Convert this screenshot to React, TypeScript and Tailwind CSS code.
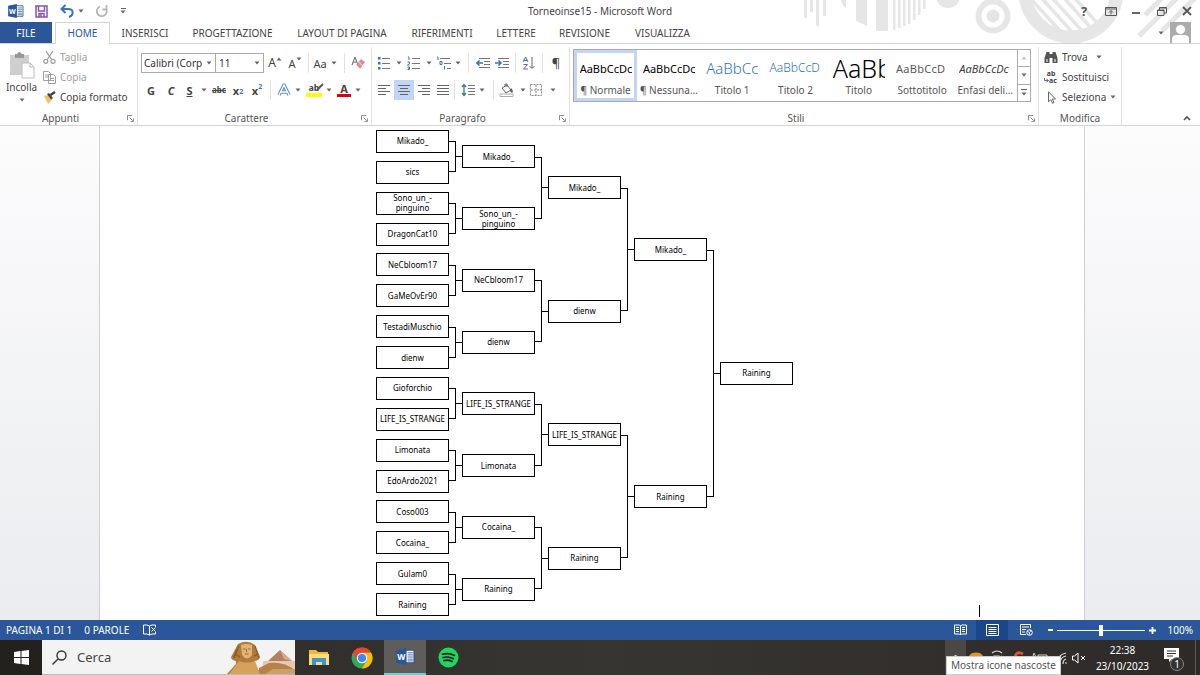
import type { ReactNode } from 'react'

interface BracketNode {
  name: string
  feeders?: [BracketNode, BracketNode]
}

const leaf = (name: string): BracketNode => ({ name })
const match = (name: string, a: BracketNode, b: BracketNode): BracketNode => ({
  name,
  feeders: [a, b],
})

const PINGUINO = 'Sono_un_-\npinguino'

const bracket = match(
  'Raining',
  match(
    'Mikado_',
    match(
      'Mikado_',
      match('Mikado_', leaf('Mikado_'), leaf('sics')),
      match(PINGUINO, leaf(PINGUINO), leaf('DragonCat10')),
    ),
    match(
      'dienw',
      match('NeCbloom17', leaf('NeCbloom17'), leaf('GaMeOvEr90')),
      match('dienw', leaf('TestadiMuschio'), leaf('dienw')),
    ),
  ),
  match(
    'Raining',
    match(
      'LIFE_IS_STRANGE',
      match('LIFE_IS_STRANGE', leaf('Gioforchio'), leaf('LIFE_IS_STRANGE')),
      match('Limonata', leaf('Limonata'), leaf('EdoArdo2021')),
    ),
    match(
      'Raining',
      match('Cocaina_', leaf('Coso003'), leaf('Cocaina_')),
      match('Raining', leaf('Gulam0'), leaf('Raining')),
    ),
  ),
)

const tabs = [
  { label: 'INSERISCI', width: 'w-[70px]' },
  { label: 'PROGETTAZIONE', width: 'w-[105px]' },
  { label: 'LAYOUT DI PAGINA', width: 'w-[114px]' },
  { label: 'RIFERIMENTI', width: 'w-[86px]' },
  { label: 'LETTERE', width: 'w-[62px]' },
  { label: 'REVISIONE', width: 'w-[75px]' },
  { label: 'VISUALIZZA', width: 'w-[81px]' },
]

const styles = [
  { name: '¶ Normale', sample: 'AaBbCcDc', look: 'text-[11px] text-black' },
  { name: '¶ Nessuna...', sample: 'AaBbCcDc', look: 'text-[11px] text-black' },
  { name: 'Titolo 1', sample: 'AaBbCc', look: 'text-[15px] font-light text-[#2e74b5]' },
  { name: 'Titolo 2', sample: 'AaBbCcD', look: 'text-[12px] font-light text-[#2e74b5]' },
  { name: 'Titolo', sample: 'AaBb', look: 'text-[25px] font-light text-black' },
  { name: 'Sottotitolo', sample: 'AaBbCcD', look: 'text-[11px] tracking-wide text-[#5a5a5a]' },
  { name: 'Enfasi deli...', sample: 'AaBbCcDc', look: 'text-[11px] italic text-[#404040]' },
]

function Caret({ className = '' }: { className?: string }) {
  return (
    <svg viewBox="0 0 6 4" className={`h-1 w-1.5 shrink-0 ${className}`}>
      <path d="M0.5 0.5h5L3 3.5z" fill="#666" />
    </svg>
  )
}

function Tool({ label, className, children }: { label: string; className: string; children: ReactNode }) {
  return (
    <button
      aria-label={label}
      className={`flex h-5 shrink-0 items-center justify-center leading-none text-[#444] ${className}`}
    >
      {children}
    </button>
  )
}

function Separator({ className = 'w-3' }: { className?: string }) {
  return (
    <span className={`flex shrink-0 justify-center ${className}`}>
      <span className="h-5 w-px bg-[#e1e1e1]" />
    </span>
  )
}

function Group({ title, launcher, className, children }: {
  title: string
  launcher?: boolean
  className: string
  children: ReactNode
}) {
  return (
    <section className={`flex flex-col border-r border-[#e1e1e1] ${className}`}>
      <div className="h-16">{children}</div>
      <div className={`relative h-3.5 text-center text-[10px] leading-[14px] text-[#555] ${launcher ? 'pr-4' : ''}`}>
        {title}
        {launcher && (
          <button aria-label={`Opzioni ${title}`} className="absolute right-[3px] top-1">
            <svg viewBox="0 0 8 8" className="size-[7px]" fill="none" stroke="#777">
              <path d="M0.5 6V0.5H6M3 3l3.5 3.5M7.5 4v3.5H4" />
            </svg>
          </button>
        )}
      </div>
    </section>
  )
}

// Four text lines whose ends depend on the paragraph alignment
function Lines({ d }: { d: string }) {
  return (
    <svg viewBox="0 0 14 12" className="h-3 w-3.5" stroke="#666" fill="none">
      <path d={d} />
    </svg>
  )
}

function WordLogo({ className }: { className: string }) {
  return (
    <svg viewBox="0 0 18 16" className={className}>
      <path d="M9 2h8v12H9z" fill="#fff" stroke="#2b579a" />
      <path d="M11 4.5h5M11 6.5h5M11 8.5h5M11 10.5h5M11 12.2h5" stroke="#2b579a" strokeWidth="0.8" />
      <path d="M0 2l10-2v16L0 14z" fill="#2b579a" />
      <text x="5" y="11" textAnchor="middle" fontSize="8" fontWeight="700" fill="#fff">W</text>
    </svg>
  )
}

function Decoration() {
  return (
    <svg viewBox="0 0 400 43" className="pointer-events-none absolute right-0 top-0 h-[43px] w-[400px]" fill="none">
      <g fill="#e6e6e6">
        <path d="M-3 0h3v12h-3zM4 0h3v18H4zM10 0h3v12h-3zM16 0h3v26h-3zM23 0h3v16h-3zM41 0h5v8q-4-3-5-8zM56 0h11v26l-11-5zM76 0h12v31H76z" />
        <path d="M93 0h2.5v30H93zM98 0h2.5v28H98zM103 0h2.5v26h-2.5zM108 0h2.5v24h-2.5zM113 0h2.5v20h-2.5zM118 0h2.5v15h-2.5zM123 0h2.5v9H123z" />
        <circle cx="148" cy="-4" r="12" />
        <circle cx="193" cy="16" r="6.5" />
      </g>
      <g stroke="#e6e6e6">
        <circle cx="193" cy="16" r="14.5" strokeWidth="6" />
        <circle cx="271" cy="-9" r="46" strokeWidth="13" />
        <path d="M228-4l36 39M237-7l36 40M246-9l37 41M255-12l37 41M264-14l34 38" strokeWidth="3.5" />
        <path d="M339 36l40-40M345 15l20-20M362 31l34-34" strokeWidth="5" />
      </g>
    </svg>
  )
}

function TitleBar() {
  return (
    <div className="relative flex h-[22px] items-center">
      <div className="flex items-center pl-2">
        <WordLogo className="h-3.5 w-4" />
        <button aria-label="Salva" className="ml-[11px]">
          <svg viewBox="0 0 13 13" className="size-[13px]" fill="none" stroke="#8856a7" strokeWidth="1.5">
            <path d="M1 1h11v11H1zM3.5 1v5h6V1M4 12V8.5h5V12M6 9v3" />
          </svg>
        </button>
        <button aria-label="Annulla" className="ml-3 flex items-center gap-1">
          <svg viewBox="0 0 14 14" className="size-3.5" fill="none" stroke="#3b73b9" strokeWidth="2">
            <path d="M5.5 1L1.5 5l4 4M2 5h6c6 0 6 6 1 8" />
          </svg>
          <Caret />
        </button>
        <button aria-label="Ripeti" className="ml-[11px]">
          <svg viewBox="0 0 14 14" className="size-3.5" fill="none" stroke="#b5b5b5" strokeWidth="1.8">
            <path d="M5 2.5a5 5 0 1 0 6 2M7.5 5.5h4v-4.5" />
          </svg>
        </button>
        <button aria-label="Personalizza" className="ml-[11px] flex flex-col items-center gap-px">
          <span className="h-px w-[5px] bg-[#666]" />
          <Caret />
        </button>
      </div>
      <h1 className="flex-1 pl-1 pr-2 text-center text-[10px] text-[#444]">Torneoinse15 - Microsoft Word</h1>
      <div className="flex items-center gap-[15px] pr-2 text-[#555]">
        <button aria-label="Guida" className="w-3 text-[13px] font-bold leading-none">?</button>
        <button aria-label="Opzioni barra multifunzione">
          <svg viewBox="0 0 12 9" className="h-[9px] w-3" fill="none" stroke="currentColor">
            <path d="M0.5 0.5h11v8H0.5zM0.5 2h11M6 7.5V4M4 5.5L6 3.5l2 2" />
          </svg>
        </button>
        <button aria-label="Riduci a icona" className="w-2.5">
          <span className="mt-1 block h-0.5 w-2 bg-[#666]" />
        </button>
        <button aria-label="Ripristina">
          <svg viewBox="0 0 10 9" className="h-[9px] w-2.5" fill="none" stroke="currentColor">
            <path d="M0.5 3h6.5v5.5H0.5zM0.5 3.5h6.5M2.5 3V0.5h7v5.5H7M2.5 1h7" />
          </svg>
        </button>
        <button aria-label="Chiudi">
          <svg viewBox="0 0 10 10" className="size-2.5" stroke="currentColor" strokeWidth="1.8">
            <path d="M1 1l8 8M9 1L1 9" />
          </svg>
        </button>
      </div>
    </div>
  )
}

function TabBar() {
  return (
    <nav className="relative flex h-[22px] border-b border-[#d4d4d4] text-[10px] text-[#444]">
      <button className="w-[52px] bg-[#2b579a] pt-px text-white">FILE</button>
      <button className="-mb-px ml-[3px] w-[55px] border border-b-0 border-[#d4d4d4] bg-white text-[#2b579a]">
        HOME
      </button>
      {tabs.map((tab) => (
        <button key={tab.label} className={`shrink-0 whitespace-nowrap pt-px text-center ${tab.width}`}>
          {tab.label}
        </button>
      ))}
      <div className="flex flex-1 items-center justify-end gap-1.5 pr-[9px]">
        <Caret />
        <svg viewBox="0 0 21 21" className="size-[21px]">
          <path d="M0 0h21v21H0z" fill="#ababab" />
          <path d="M2 21v-4q0-4 5-4h7q5 0 5 4v4z" fill="#fff" />
          <circle cx="10.5" cy="7.5" r="5" fill="#fff" stroke="#ababab" />
        </svg>
      </div>
    </nav>
  )
}

function Clipboard() {
  return (
    <Group title="Appunti" launcher className="w-[138px]">
      <div className="flex text-[10px] text-[#444]">
        <button className="flex w-[43px] flex-col items-center pt-1">
          <svg viewBox="0 0 26 28" className="h-7 w-[26px]">
            <path d="M1 4h19v20H1z" fill="#cfcfcf" />
            <path d="M6 3h2q2-4 5 0h2v4H6z" fill="#999" />
            <path d="M13 12h8l4 4v11H13z" fill="#fff" stroke="#bbb" />
            <path d="M21 12v4h4" fill="none" stroke="#bbb" />
          </svg>
          <span className="pt-px leading-[14px]">Incolla</span>
          <Caret className="mt-1" />
        </button>
        <div className="flex flex-col">
          <button className="flex h-5 items-center gap-1 text-[#a0a0a0]">
            <svg viewBox="0 0 13 13" className="size-[13px]" fill="none" stroke="#a0a0a0" strokeWidth="1.3">
              <path d="M3 0l6 9M10 0L4 9" />
              <circle cx="2.8" cy="10.3" r="2" />
              <circle cx="10" cy="10.3" r="2" />
            </svg>
            Taglia
          </button>
          <button className="flex h-5 items-center gap-1 text-[#a0a0a0]">
            <svg viewBox="0 0 13 13" className="size-[13px]" fill="#fff" stroke="#a0a0a0">
              <path d="M0.5 0.5h5l2 2v7h-7zM5.5 3.5h5l2 2v7h-7z" />
              <path d="M2 4h3M2 6h3M7 7.5h4M7 9.5h4" />
            </svg>
            Copia
          </button>
          <button className="flex h-5 items-center gap-1 whitespace-nowrap">
            <svg viewBox="0 0 13 13" className="size-[13px]">
              <path d="M1 5l4-1 4 5-4 4z" fill="#efc06e" />
              <path d="M4 3l2-1 4 5-2 1.5z" fill="#444" />
              <path d="M7.5 4L12 1" stroke="#444" strokeWidth="2.5" />
            </svg>
            Copia formato
          </button>
        </div>
      </div>
    </Group>
  )
}

function FontGroup() {
  return (
    <Group title="Carattere" launcher className="w-[234px]">
      <div className="flex flex-col gap-[7px] pl-[3px] pt-1.5">
        <div className="flex h-5 items-center">
          <label className="relative flex h-5 w-[75px] items-center border border-[#ababab]">
            <select aria-label="Tipo di carattere" className="w-full appearance-none bg-transparent pl-0.5 text-[10px] text-[#333]">
              <option>Calibri (Corp</option>
            </select>
            <Caret className="absolute right-[3px]" />
          </label>
          <label className="relative flex h-5 w-12 items-center border border-l-0 border-[#ababab]">
            <select aria-label="Dimensione carattere" className="w-full appearance-none bg-transparent pl-[3px] text-[10px] text-[#333]">
              <option>11</option>
            </select>
            <Caret className="absolute right-[3px]" />
          </label>
          <Tool label="Aumenta" className="w-[22px] text-[12px]">A<Caret className="mb-2 rotate-180" /></Tool>
          <Tool label="Riduci" className="w-[18px] text-[11px]">A<Caret className="mb-2" /></Tool>
          <Separator className="w-2" />
          <Tool label="Maiuscole/minuscole" className="w-[26px] gap-1 text-[11px]">Aa<Caret /></Tool>
          <Separator />
          <Tool label="Cancella formattazione" className="w-4">
            <svg viewBox="0 0 14 14" className="size-3.5 shrink-0">
              <path d="M1 9L4 1l3 8M2 6h4" fill="none" stroke="#666" />
              <path d="M5 9l5-6 4 3-5 7z" fill="#e58a9b" />
              <path d="M5 9l4 4M7.5 6l4 3.5" stroke="#fff" strokeWidth="0.7" />
            </svg>
          </Tool>
        </div>
        <div className="flex h-5 items-center text-[11px]">
          <Tool label="Grassetto" className="w-5 font-bold">G</Tool>
          <Tool label="Corsivo" className="w-5 font-bold italic">C</Tool>
          <Tool label="Sottolineato" className="w-[17px] font-bold underline">S</Tool>
          <Tool label="Stile sottolineatura" className="w-3"><Caret /></Tool>
          <Tool label="Barrato" className="w-[18px] text-[8px] font-bold line-through">abc</Tool>
          <Tool label="Pedice" className="w-5 font-bold">x<sub className="text-[7px] text-[#3b73b9]">2</sub></Tool>
          <Tool label="Apice" className="w-[18px] font-bold">x<sup className="text-[7px] text-[#3b73b9]">2</sup></Tool>
          <Separator className="w-2" />
          <Tool label="Effetti testo" className="w-5">
            <svg viewBox="0 0 14 14" className="size-3.5" fill="none">
              <path d="M2 12L7 2l5 10M4 9h6" stroke="#5b92d0" strokeWidth="3.5" strokeLinejoin="round" />
              <path d="M2 12L7 2l5 10M4 9h6" stroke="#fff" strokeWidth="1.3" />
            </svg>
          </Tool>
          <Tool label="Scelta effetto" className="w-[7px]"><Caret /></Tool>
          <Tool label="Evidenziatore" className="ml-1 w-[18px] flex-col">
            <span className="relative text-[9px] font-bold leading-[10px]">
              ab
              <svg viewBox="0 0 8 8" className="absolute -right-1 top-0 size-2"><path d="M1 7L7 1" stroke="#555" strokeWidth="2" /></svg>
            </span>
            <span className="h-1 w-4 bg-[#ffff00]" />
          </Tool>
          <Tool label="Colore evidenziatore" className="w-[11px]"><Caret /></Tool>
          <Tool label="Colore carattere" className="w-5 flex-col">
            <span className="text-[11px] font-bold leading-[11px]">A</span>
            <span className="h-[3px] w-3.5 bg-[#e00000]" />
          </Tool>
          <Tool label="Scelta colore" className="w-2"><Caret /></Tool>
        </div>
      </div>
    </Group>
  )
}

function ParagraphGroup() {
  return (
    <Group title="Paragrafo" launcher className="w-[198px]">
      <div className="flex flex-col gap-[7px] pl-0.5 pt-1.5">
        <div className="flex h-5 items-center">
          <Tool label="Elenchi puntati" className="w-5">
            <svg viewBox="0 0 14 14" className="size-3.5">
              <path d="M1 1h2.5v2.5H1zM1 6h2.5v2.5H1zM1 11h2.5v2.5H1z" fill="#3b73b9" />
              <path d="M5 2.5h8M5 7.5h8M5 12.5h8" stroke="#777" />
            </svg>
          </Tool>
          <Tool label="Punto elenco" className="w-2.5"><Caret /></Tool>
          <Tool label="Elenchi numerati" className="w-5">
            <svg viewBox="0 0 14 14" className="size-3.5" fill="none">
              <path d="M1 1h1v3M0.5 6h2v1.5l-2 1.5h2M0.5 11h2v2.5h-2M1 12.2h1.5" stroke="#3b73b9" />
              <path d="M5 2.5h8M5 7.5h8M5 12.5h8" stroke="#777" />
            </svg>
          </Tool>
          <Tool label="Formato numero" className="w-2.5"><Caret /></Tool>
          <Tool label="Elenco a più livelli" className="w-5">
            <svg viewBox="0 0 16 14" className="h-3.5 w-4" fill="none">
              <path d="M1 1h1v3M4 5.5h2v3H4zM8.5 10v3.5" stroke="#3b73b9" />
              <path d="M4 2.5h10M8 7.5h7M11 12.5h4" stroke="#777" />
            </svg>
          </Tool>
          <Tool label="Livelli" className="w-2"><Caret /></Tool>
          <Separator />
          <Tool label="Riduci rientro" className="w-[18px]">
            <svg viewBox="0 0 14 12" className="h-3 w-3.5" fill="none">
              <path d="M3 1.5h11M8 4.5h6M8 7.5h6M3 10.5h11" stroke="#777" />
              <path d="M7 6H1M3.5 3.5L1 6l2.5 2.5" stroke="#3b73b9" strokeWidth="1.6" />
            </svg>
          </Tool>
          <Tool label="Aumenta rientro" className="w-5">
            <svg viewBox="0 0 14 12" className="h-3 w-3.5" fill="none">
              <path d="M3 1.5h11M8 4.5h6M8 7.5h6M3 10.5h11" stroke="#777" />
              <path d="M0 6h6M3.5 3.5L6 6 3.5 8.5" stroke="#3b73b9" strokeWidth="1.6" />
            </svg>
          </Tool>
          <Separator className="w-1.5" />
          <Tool label="Ordina" className="w-[22px]">
            <svg viewBox="0 0 14 14" className="size-3.5" fill="none">
              <path d="M1 6l2.5-5L6 6M2 4.5h3" stroke="#3b73b9" />
              <path d="M1.5 8.5h4l-4 4.5h4.5" stroke="#8856a7" />
              <path d="M10 1v11M7.5 10L10 12.5 12.5 10" stroke="#666" />
            </svg>
          </Tool>
          <Separator className="w-1" />
          <Tool label="Mostra tutto" className="w-6 text-[13px]">¶</Tool>
        </div>
        <div className="flex h-5 items-center">
          <Tool label="Allinea a sinistra" className="w-5"><Lines d="M1 1.5h12M1 4.5h8M1 7.5h12M1 10.5h8" /></Tool>
          <Tool label="Centra" className="w-5 bg-[#c2d5f2]"><Lines d="M1 1.5h12M3 4.5h8M1 7.5h12M3 10.5h8" /></Tool>
          <Tool label="Allinea a destra" className="w-5"><Lines d="M1 1.5h12M5 4.5h8M1 7.5h12M5 10.5h8" /></Tool>
          <Tool label="Giustifica" className="w-[18px]"><Lines d="M1 1.5h12M1 4.5h12M1 7.5h12M1 10.5h12" /></Tool>
          <Separator className="w-1" />
          <Tool label="Interlinea" className="w-[34px] gap-1">
            <svg viewBox="0 0 14 14" className="size-3.5" fill="none">
              <path d="M3 1.5v11M1 4l2-2.5L5 4M1 10l2 2.5L5 10" stroke="#3b73b9" strokeWidth="1.3" />
              <path d="M7 2.5h7M7 5.5h7M7 8.5h7M7 11.5h7" stroke="#777" />
            </svg>
            <Caret />
          </Tool>
          <Separator className="w-1.5" />
          <Tool label="Sfondo" className="w-8 gap-1.5">
            <svg viewBox="0 0 15 14" className="h-3.5 w-[15px]" fill="none">
              <path d="M3 5l5-3 4 5-5 3zM6 4V1h2v3" stroke="#666" />
              <path d="M12 5q3 3 1 5l-2-2z" fill="#3b5f8a" />
              <path d="M1 11h13v2.5H1z" stroke="#aaa" fill="#fff" />
            </svg>
            <Caret />
          </Tool>
          <Tool label="Bordi" className="w-[30px] gap-2">
            <svg viewBox="0 0 12 12" className="size-3" fill="none" stroke="#888">
              <path d="M0.5 0.5h11v11H0.5zM6 1v10M1 6h10" strokeDasharray="2 1" />
            </svg>
            <Caret />
          </Tool>
        </div>
      </div>
    </Group>
  )
}

function StylesGroup() {
  return (
    <Group title="Stili" launcher className="w-[469px]">
      <div className="pl-[3px] pr-[7px] pt-0.5">
        <div className="flex h-[53px] border border-[#ababab]">
          {styles.map((style, index) => (
            <button
              key={style.name}
              className={`flex min-w-0 flex-1 flex-col items-center justify-end overflow-hidden border-[3px] ${
                index === 0 ? 'border-[#c2d5f2]' : 'border-transparent'
              }`}
            >
              <span className={`flex h-[30px] w-[52px] items-center overflow-hidden whitespace-nowrap leading-none ${style.look}`}>
                {style.sample}
              </span>
              <span className="whitespace-nowrap text-[10px] leading-[15px] text-[#555]">{style.name}</span>
            </button>
          ))}
          <div className="flex w-[13px] flex-col divide-y divide-[#ababab] border-l border-[#ababab]">
            <button aria-label="Su" className="flex flex-1 items-center justify-center"><Caret className="rotate-180 opacity-40" /></button>
            <button aria-label="Giù" className="flex flex-1 items-center justify-center"><Caret /></button>
            <button aria-label="Altro" className="flex flex-1 flex-col items-center justify-center gap-0.5">
              <span className="h-px w-1.5 bg-[#666]" />
              <Caret />
            </button>
          </div>
        </div>
      </div>
    </Group>
  )
}

function EditGroup() {
  return (
    <Group title="Modifica" className="w-[83px]">
      <div className="flex flex-col items-start pl-[5px] text-[10px] text-[#444]">
        <button className="flex h-5 items-center gap-1">
          <svg viewBox="0 0 13 12" className="h-3 w-3.5" fill="#555">
            <path d="M2 1h3v2h3V1h3l2 6v5H8V7H5v5H0V7z" />
            <path d="M1.5 8h2v3h-2zM9.5 8h2v3h-2z" fill="#aaa" />
          </svg>
          Trova
          <Caret className="ml-1" />
        </button>
        <button className="flex h-5 items-center gap-1">
          <span className="flex w-3.5 flex-col text-[7px] font-bold leading-[7px]">
            <span>ab</span>
            <span className="flex items-center">
              <svg viewBox="0 0 5 5" className="size-[5px]" fill="none" stroke="#3b73b9">
                <path d="M0.5 0v2.5h4M2.5 1l2 1.5-2 1.5" />
              </svg>
              ac
            </span>
          </span>
          Sostituisci
        </button>
        <button className="flex h-5 items-center gap-1 whitespace-nowrap">
          <svg viewBox="0 0 13 13" className="h-[13px] w-3.5" fill="#fff" stroke="#666">
            <path d="M4 0.8v10l2.3-2.2 1.7 3.7 1.5-0.7L7.8 8H11z" />
          </svg>
          Seleziona
          <Caret />
        </button>
      </div>
    </Group>
  )
}

function Ribbon() {
  return (
    <div className="flex h-[82px] border-b border-[#d4d4d4] bg-white">
      <div className="flex flex-1 pt-[3px]">
        <Clipboard />
        <FontGroup />
        <ParagraphGroup />
        <StylesGroup />
        <EditGroup />
      </div>
      <button aria-label="Comprimi barra multifunzione" className="self-end pb-1 pr-[9px]">
        <svg viewBox="0 0 8 6" className="h-1.5 w-2" fill="none" stroke="#555" strokeWidth="1.6">
          <path d="M1 5l3-3 3 3" />
        </svg>
      </button>
    </div>
  )
}

function Match({ node }: { node: BracketNode }) {
  return (
    <div className="flex min-h-0 flex-1 items-center">
      {node.feeders && (
        <>
          <div className="flex flex-col self-stretch">
            {node.feeders.map((feeder, index) => (
              <Match key={index} node={feeder} />
            ))}
          </div>
          <div className="h-1/2 w-[7px] border-y border-r border-black" />
          <div className="h-px w-1.5 bg-black" />
        </>
      )}
      <div className="flex h-[23px] w-[73px] shrink-0 items-center justify-center whitespace-pre border border-black bg-white text-center text-[8px] leading-[10px] text-black">
        {node.name}
      </div>
    </div>
  )
}

function Document() {
  return (
    <main className="flex min-h-0 flex-1 bg-linear-to-b from-[#fcfcfd] to-[#ebecef] pl-[99px] pr-[115px]">
      <div className="relative flex flex-1 border-x border-[#d0d0d0] bg-white pl-[276px]">
        <div className="flex">
          <Match node={bracket} />
        </div>
        <span className="absolute bottom-[3px] right-[104px] h-3 w-px bg-black" />
      </div>
    </main>
  )
}

function StatusBar() {
  return (
    <footer className="flex h-5 items-center bg-[#2b579a] text-[10px] text-white">
      <span className="pl-1.5">PAGINA 1 DI 1</span>
      <span className="ml-3">0 PAROLE</span>
      <button aria-label="Controllo ortografia" className="ml-3.5">
        <svg viewBox="0 0 14 12" className="h-3 w-3.5" fill="none" stroke="#fff">
          <path d="M6.5 2Q4 0.5 0.5 1v9q3.5-0.5 6 1V2q2-1.5 6-1v2M6.5 11q2-1.5 6-1V8M8.5 3.5l4 4M12.5 3.5l-4 4" />
        </svg>
      </button>
      <div className="ml-auto flex h-full items-center">
        <button aria-label="Modalità lettura" className="flex h-full w-8 items-center justify-center">
          <svg viewBox="0 0 13 12" className="h-3 w-[13px]" fill="none" stroke="#fff">
            <path d="M0.5 1h5l1 1 1-1h5v9h-5l-1 1-1-1h-5zM6.5 2v9M2 3.5h3M2 5.5h3M2 7.5h3M8 3.5h3M8 5.5h3M8 7.5h3" />
          </svg>
        </button>
        <button aria-label="Layout di stampa" className="flex h-full w-8 items-center justify-center bg-[#19478a]">
          <svg viewBox="0 0 13 12" className="h-3 w-[13px]" fill="none" stroke="#fff">
            <path d="M0.5 0.5h12v11H0.5zM2.5 3.5h8M2.5 5.5h8M2.5 7.5h8M2.5 9.5h8" />
          </svg>
        </button>
        <button aria-label="Layout Web" className="flex h-full w-9 items-center justify-center">
          <svg viewBox="0 0 13 12" className="h-3 w-[13px]" fill="none" stroke="#fff">
            <path d="M6 10.5H0.5V0.5h10V4M2 3h7M2 5.5h4M2 8h3" />
            <circle cx="9.5" cy="8.5" r="2.8" />
            <path d="M7.5 7.5l2 1v2M10 6l1 2" />
          </svg>
        </button>
        <button aria-label="Zoom indietro" className="flex w-3 justify-center"><span className="h-0.5 w-[5px] bg-white" /></button>
        <input
          type="range"
          aria-label="Zoom"
          defaultValue={50}
          className="mx-px h-[11px] w-[88px] appearance-none bg-linear-to-b from-transparent from-45% via-white via-50% to-transparent to-55% [&::-webkit-slider-thumb]:h-[11px] [&::-webkit-slider-thumb]:w-1 [&::-webkit-slider-thumb]:appearance-none [&::-webkit-slider-thumb]:bg-white"
        />
        <button aria-label="Zoom avanti" className="flex w-3 justify-center">
          <svg viewBox="0 0 7 7" className="size-[7px]" stroke="#fff" strokeWidth="1.8"><path d="M0 3.5h7M3.5 0v7" /></svg>
        </button>
        <span className="w-[42px] pr-[7px] text-right">100%</span>
      </div>
    </footer>
  )
}

function Sphinx() {
  return (
    <svg viewBox="0 0 68 33" className="h-[33px] w-[68px] shrink-0">
      <path d="M36 20h32v13H36z" fill="#e6c7b1" />
      <path d="M53 9l12 11H41z" fill="#b47f62" />
      <path d="M53 9l12 11-8-2z" fill="#d9a98a" />
      <path d="M42 22l-10 5v6h36v-4q-12-9-26-7z" fill="#b88148" />
      <path d="M46 28h22v5H38z" fill="#caa06b" />
      <path d="M11 3q9-5 17 1l5 12q-1 4-6 4v4l8 9H0l9-10v-3q-5-1-5-4z" fill="#b07a3c" />
      <path d="M12 5L7 17M10 8l-3 8M28 5l4 12M8 13l5 3M27 15l4-2" stroke="#8a5a26" strokeWidth="1.2" />
      <path d="M14 4q5-2 11 0v10q-5 7-10 0z" fill="#e0b373" />
      <path d="M16 8h2.5M21 8h2.5M18 13h3.5M19.5 8v3" stroke="#8a5c2c" strokeWidth="0.8" />
      <path d="M12 20q8 3 16 0l5 13H2z" fill="#d4a25d" />
    </svg>
  )
}

function Taskbar() {
  return (
    <div className="flex h-[35px] bg-linear-to-r from-[#2c2a27] via-[#373531] to-[#2d2a28] text-white">
      <button aria-label="Start" className="flex w-[42px] items-center justify-center bg-[#22211e]">
        <svg viewBox="0 0 15 15" className="size-[15px]" fill="#fff">
          <path d="M0 2l6.5-1v6H0zM7.5 0.9L15 0v7H7.5zM0 8h6.5v6L0 13zM7.5 8H15v7l-7.5-1z" />
        </svg>
      </button>
      <label className="flex w-[253px] items-center border-b border-[#bbb] bg-[#f3f3f3] pl-2.5">
        <svg viewBox="0 0 15 15" className="size-[15px] shrink-0" fill="none" stroke="#333" strokeWidth="1.4">
          <circle cx="9.5" cy="5.5" r="4.5" />
          <path d="M6 9l-5.5 5.5" />
        </svg>
        <input
          aria-label="Cerca"
          placeholder="Cerca"
          className="ml-2.5 min-w-0 flex-1 bg-transparent pt-px text-[13px] text-[#333] outline-none placeholder:text-[#444]"
        />
        <Sphinx />
      </label>
      <button aria-label="Esplora file" className="ml-0.5 flex w-[43px] items-center justify-center">
        <svg viewBox="0 0 20 17" className="h-[17px] w-5">
          <path d="M0 1h7l2 2h10v13H0z" fill="#eeb73f" />
          <path d="M0 5h20v11H0z" fill="#ffdb76" />
          <path d="M3 9h14v7h-4v-3H7v3H3z" fill="#3a96d1" />
        </svg>
      </button>
      <button aria-label="Chrome" className="flex w-11 items-center justify-center">
        <svg viewBox="0 0 22 22" className="size-[22px]">
          <circle cx="11" cy="11" r="10.5" fill="#34a853" />
          <path d="M11 0.5A10.5 10.5 0 0 1 20.1 5.75H11L6.5 13.6 1.9 5.75A10.5 10.5 0 0 1 11 0.5z" fill="#ea4335" />
          <path d="M20.1 5.75A10.5 10.5 0 0 1 11 21.5L15.5 13.6 11 5.75z" fill="#fbbc04" />
          <circle cx="11" cy="11" r="5.2" fill="#fff" />
          <circle cx="11" cy="11" r="4.1" fill="#4285f4" />
        </svg>
      </button>
      <button aria-label="Word" className="flex w-[42px] items-center justify-center border-b-2 border-[#7fc8cf] bg-[#5f5d5a]">
        <WordLogo className="h-[17px] w-[19px]" />
      </button>
      <button aria-label="Spotify" className="flex w-11 items-center justify-center">
        <svg viewBox="0 0 21 21" className="size-[21px]" fill="none">
          <circle cx="10.5" cy="10.5" r="10" fill="#1ed760" />
          <path d="M4.5 7.2q6.5-1.7 12 1.2M5.2 10.5q5.5-1.4 10.2 1.2M5.8 13.6q4.5-1.1 8.3 1" stroke="#1c1c1a" strokeWidth="1.7" strokeLinecap="round" />
        </svg>
      </button>
      <div className="ml-auto flex items-center">
        <div className="relative flex h-full items-center">
          <button aria-label="Mostra icone nascoste" className="flex h-full w-[21px] justify-center bg-[#4a4744] pt-3.5">
            <svg viewBox="0 0 9 6" className="h-1.5 w-[9px]" fill="none" stroke="#fff"><path d="M1 5l3.5-4L8 5" /></svg>
          </button>
          <svg viewBox="0 0 106 22" className="h-[22px] w-[106px]" fill="none">
            <ellipse cx="10" cy="10" rx="7" ry="4.5" fill="#d79a2e" />
            <path d="M26 6q5-4 10 0M28 9h5v6h-5zM33 11l3-2" stroke="#ddd" strokeWidth="1.2" />
            <path d="M57 7q-7-4-8 4 1 6 7 4" stroke="#d9543f" strokeWidth="3" />
            <path d="M66 12l2-6 3 6M72 8h9v8h-9z" stroke="#ccc" />
            <path d="M91 17q0-9 9-11M94 17q0-7 6-8M97 17q0-4 3-5M99 16h2" stroke="#ddd" strokeWidth="1.2" />
          </svg>
          <span role="tooltip" className="absolute bottom-0 left-px whitespace-nowrap border border-[#ccc] bg-white px-1 text-[10px] leading-[17px] text-[#555]">
            Mostra icone nascoste
          </span>
        </div>
        <button aria-label="Volume" className="w-[15px]">
          <svg viewBox="0 0 14 12" className="h-3 w-3.5" fill="none" stroke="#fff">
            <path d="M0.5 4h2L6 1v10L2.5 8h-2zM9 4l4 4M13 4L9 8" />
          </svg>
        </button>
        <div className="w-[71px] text-center text-[10px] leading-4">
          <div>22:38</div>
          <div>23/10/2023</div>
        </div>
        <button aria-label="Notifiche" className="relative flex h-full w-9 items-center justify-center">
          <svg viewBox="0 0 15 15" className="mb-1 mr-2.5 size-[15px]">
            <path d="M0 0h15v11H8l-3 3v-3H0z" fill="#fff" />
            <path d="M3 3h9M3 5.5h9M3 8h6" stroke="#333" />
          </svg>
          <span className="absolute bottom-1 right-2.5 flex size-3.5 items-center justify-center rounded-full border border-[#888] bg-[#333] text-[10px] leading-none">
            1
          </span>
        </button>
        <span className="ml-px mr-1 h-full w-px bg-[#5a5856]" />
      </div>
    </div>
  )
}

export default function App() {
  return (
    <div className="flex h-screen min-h-[600px] flex-col overflow-hidden bg-white font-['Noto_Sans','Open_Sans',sans-serif]">
      <header className="relative">
        <Decoration />
        <TitleBar />
        <TabBar />
      </header>
      <Ribbon />
      <Document />
      <StatusBar />
      <Taskbar />
    </div>
  )
}
